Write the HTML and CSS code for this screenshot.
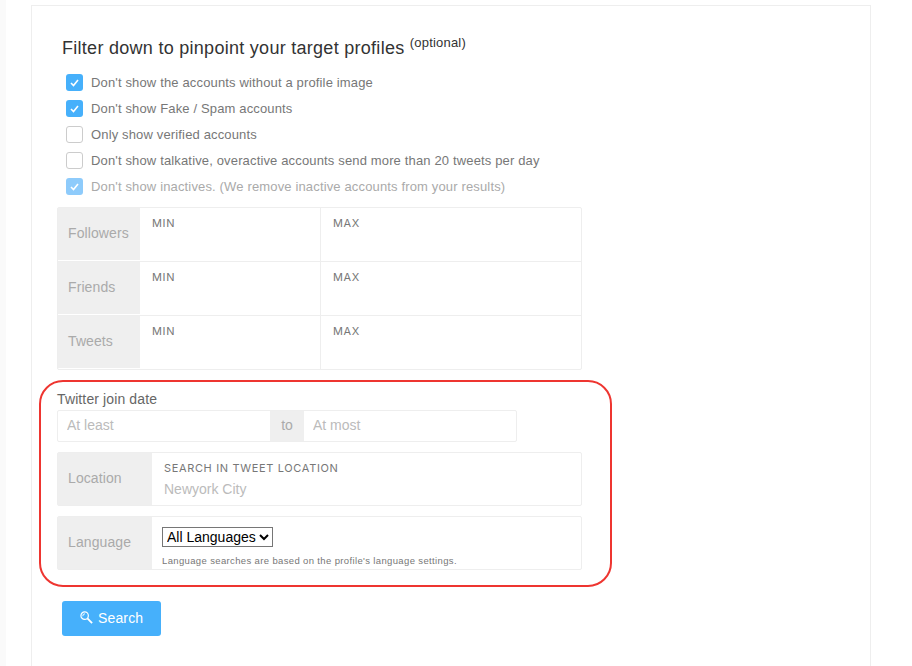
FILE: index.html
```html
<!DOCTYPE html>
<html lang="en">
<head>
    <meta charset="UTF-8">
    <title>Filter profiles</title>
    <link rel="stylesheet" href="styles.css">
</head>
<body>
    <div class="page">
        <div class="card">
            <h2>Filter down to pinpoint your target profiles <sup>(optional)</sup></h2>

            <ul class="checks">
                <li><span class="box on"><svg viewBox="0 0 17 17"><path d="M5 9l2.5 2.5L12 6"/></svg></span>Don't show the accounts without a profile image</li>
                <li><span class="box on"><svg viewBox="0 0 17 17"><path d="M5 9l2.5 2.5L12 6"/></svg></span>Don't show Fake / Spam accounts</li>
                <li><span class="box"></span>Only show verified accounts</li>
                <li><span class="box"></span>Don't show talkative, overactive accounts send more than 20 tweets per day</li>
                <li class="disabled"><span class="box on"><svg viewBox="0 0 17 17"><path d="M5 9l2.5 2.5L12 6"/></svg></span>Don't show inactives. (We remove inactive accounts from your results)</li>
            </ul>

            <div class="ranges">
                <div class="range-row">
                    <div class="addon">Followers</div>
                    <div class="range-cell"><label>MIN</label></div>
                    <div class="range-cell"><label>MAX</label></div>
                </div>
                <div class="range-row">
                    <div class="addon">Friends</div>
                    <div class="range-cell"><label>MIN</label></div>
                    <div class="range-cell"><label>MAX</label></div>
                </div>
                <div class="range-row">
                    <div class="addon">Tweets</div>
                    <div class="range-cell"><label>MIN</label></div>
                    <div class="range-cell"><label>MAX</label></div>
                </div>
            </div>

            <div class="highlight">
                <div class="join-label">Twitter join date</div>
                <div class="date-row">
                    <input type="text" placeholder="At least">
                    <span class="to">to</span>
                    <input type="text" placeholder="At most">
                </div>

                <div class="field">
                    <div class="addon wide">Location</div>
                    <div class="field-body">
                        <label>SEARCH IN TWEET LOCATION</label>
                        <input type="text" placeholder="Newyork City">
                    </div>
                </div>

                <div class="field">
                    <div class="addon wide">Language</div>
                    <div class="field-body lang">
                        <select>
                            <option>All Languages</option>
                        </select>
                        <small>Language searches are based on the profile's language settings.</small>
                    </div>
                </div>
            </div>

            <button class="search" type="button">
                <svg viewBox="0 0 14 14"><circle cx="5" cy="5" r="4"/><path class="thin" d="M3 5.6a2.4 2.4 0 0 1 2.4-2.6"/><path class="handle" d="M8 8l5 5"/></svg>
                Search
            </button>
        </div>
    </div>
</body>
</html>
```

FILE: styles.css
```css
* {
    box-sizing: border-box;
}

body {
    margin: 0;
    background-color: #fafafa;
    font-family: "Liberation Sans", Arial, sans-serif;
    color: #777;
    height: 666px;
    overflow: hidden;
}

.page {
    margin-left: 6px;
    padding: 5px 0 0 25px;
    background-color: #fff;
    height: 100%;
}

.card {
    width: 840px;
    height: 661px;
    padding: 30px 0 0 25px;
    border: 1px solid #eee;
    border-bottom: 0;
}

h2 {
    margin: 0 0 0 5px;
    font-size: 18px;
    font-weight: 400;
    line-height: 24px;
    letter-spacing: 0.28px;
    color: #333;
}

h2 sup {
    font-size: 13px;
    line-height: 0;
    letter-spacing: 0.2px;
}

.checks {
    list-style: none;
    margin: 9px 0 0 9px;
    padding: 0;
}

.checks li {
    display: flex;
    align-items: center;
    height: 26px;
    font-size: 13px;
    letter-spacing: 0.15px;
}

.checks .disabled {
    color: #aaa;
}

.box {
    flex: none;
    width: 17px;
    height: 17px;
    margin-right: 8px;
    border: 1px solid #ccc;
    border-radius: 3px;
    background-color: #fff;
}

.box.on {
    border: 0;
    background-color: #46b0fb;
}

.disabled .box.on {
    background-color: #8ecbfb;
}

.box svg {
    display: block;
    width: 17px;
    height: 17px;
    fill: none;
    stroke: #fff;
    stroke-width: 1.6;
}

.ranges {
    width: 525px;
    margin-top: 8px;
    border: 1px solid #eee;
    border-radius: 2px;
}

.range-row {
    display: flex;
    height: 54px;
}

.range-row:first-child {
    height: 53px;
}

.range-row + .range-row {
    border-top: 1px solid #eee;
}

.range-row .addon {
    margin-bottom: 1px;
}

.addon {
    flex: none;
    display: flex;
    align-items: center;
    width: 82px;
    padding: 0 0 2px 10px;
    background-color: #efefef;
    font-size: 14px;
    letter-spacing: 0.1px;
    color: #aaa;
}

.addon.wide {
    width: 94px;
}

.range-cell {
    flex: none;
    width: 180px;
    padding: 9px 12px 0;
}

.range-cell + .range-cell {
    flex: 1;
    border-left: 1px solid #eee;
}

label {
    display: block;
    font-family: Inter, "Noto Sans", sans-serif;
    font-size: 11px;
    line-height: 13px;
    letter-spacing: 0.65px;
    color: #777;
}

.highlight {
    width: 573px;
    height: 207px;
    margin: 10px 0 0 -18px;
    padding: 8px 0 0 16px;
    border: 2px solid #ee3530;
    border-radius: 24px;
}

.join-label {
    margin-bottom: 2px;
    font-size: 14px;
    line-height: 18px;
    letter-spacing: 0.12px;
    color: #666;
}

.date-row {
    display: flex;
    width: 460px;
    height: 32px;
    border: 1px solid #eee;
    border-radius: 2px;
}

input {
    min-width: 0;
    border: 0;
    padding: 0;
    outline: none;
    background: transparent;
    font-family: "Liberation Sans", Arial, sans-serif;
    font-size: 14px;
}

input::placeholder {
    color: #bbb;
    opacity: 1;
}

.date-row input {
    flex: 1;
    padding: 0 0 2px 9px;
}

.to {
    flex: none;
    display: flex;
    align-items: center;
    justify-content: center;
    width: 34px;
    padding-bottom: 2px;
    background-color: #efefef;
    font-size: 14px;
    color: #aaa;
}

.field {
    display: flex;
    width: 525px;
    height: 54px;
    margin-top: 10px;
    border: 1px solid #eee;
    border-radius: 2px;
}

.field-body {
    flex: 1;
    padding: 9px 12px 0;
}

.field-body input {
    display: block;
    width: 100%;
    height: 22px;
    margin-top: 3px;
}

.lang {
    padding: 10px 10px 0;
}

select {
    display: block;
    width: 111px;
    height: 20px;
    border: 1px solid #767676;
    font-family: "Liberation Sans", Arial, sans-serif;
    font-size: 14px;
    background-color: #fff;
    color: #000;
}

small {
    display: block;
    margin-top: 8px;
    font-size: 9.5px;
    letter-spacing: 0.36px;
    color: #777;
}

.search {
    display: flex;
    align-items: center;
    gap: 5px;
    width: 99px;
    height: 35px;
    margin: 14px 0 0 5px;
    padding: 0 0 2px 18px;
    border: 0;
    border-radius: 3px;
    background-color: #46b0fb;
    font-family: "Liberation Sans", Arial, sans-serif;
    font-size: 14px;
    letter-spacing: 0.15px;
    color: #fff;
}

.search svg {
    width: 13px;
    height: 13px;
    fill: none;
    stroke: #fff;
    stroke-width: 1.3;
}

.search svg .thin {
    stroke-width: 1;
}

.search svg .handle {
    stroke-width: 2;
}
```
